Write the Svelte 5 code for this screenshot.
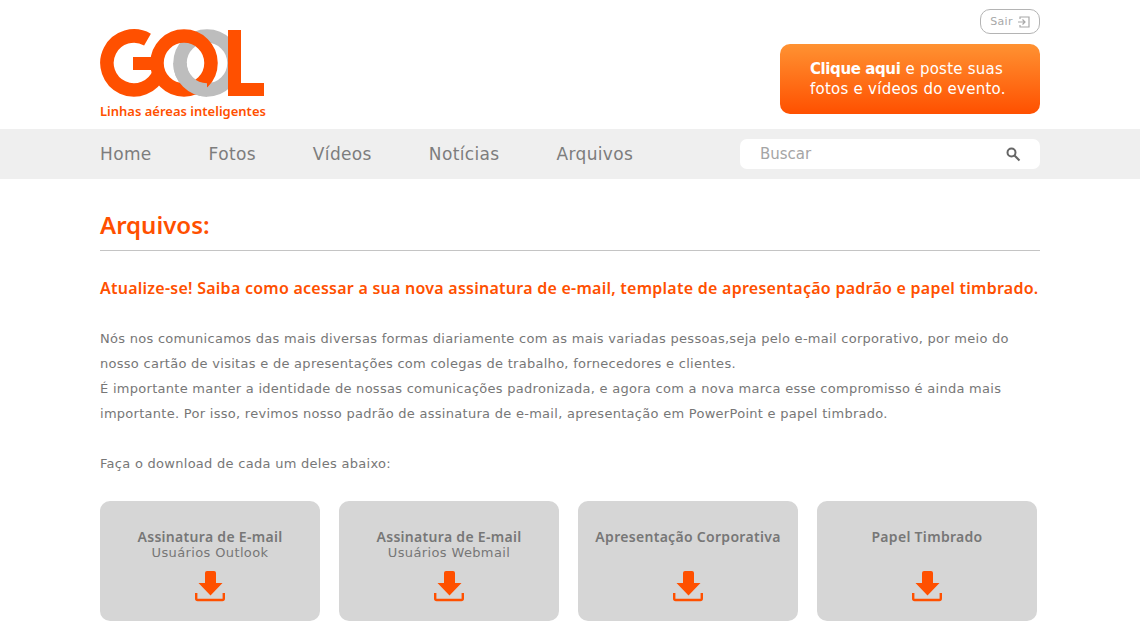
<script>
	const navItems = ['Home', 'Fotos', 'Vídeos', 'Notícias', 'Arquivos'];
	const downloads = [
		{ title: 'Assinatura de E-mail', sub: 'Usuários Outlook' },
		{ title: 'Assinatura de E-mail', sub: 'Usuários Webmail' },
		{ title: 'Apresentação Corporativa', sub: '' },
		{ title: 'Papel Timbrado', sub: '' }
	];
</script>

<div class="page">
	<header class="top wrap">
		<div class="brand">
			<svg class="logo" width="166" height="70" viewBox="0 0 166 70" fill="none">
				<circle cx="107" cy="34" r="27" stroke="#bdbdbd" stroke-width="13.500" />
				<circle cx="84" cy="34" r="27" stroke="#ff5000" stroke-width="13.500" />
				<path d="M47.500 10.600 A27 27 0 1 0 59 44" stroke="#ff5000" stroke-width="13.500" />
				<path d="M33 28h27v13H33z" fill="#ff5000" />
				<!-- gray ring passes over the orange one at the lower crossing -->
				<path d="M80 34 A27 27 0 0 0 107 61" stroke="#bdbdbd" stroke-width="13.500" />
				<path d="M128 1h13v53h23v13h-36z" fill="#ff5000" />
			</svg>
			<span class="tagline">Linhas aéreas inteligentes</span>
		</div>
		<div class="actions">
			<a class="logout" href="#sair">
				Sair
				<svg width="13" height="12" viewBox="0 0 13 12" fill="none" stroke="#a8a8a8" stroke-width="1.200">
					<path d="M3 3V1h9v10H3V9M1 6h7M5.500 3.500 8 6 5.500 8.500" />
				</svg>
			</a>
			<a class="cta" href="#postar"><b>Clique aqui</b> e poste suas<br />fotos e vídeos do evento.</a>
		</div>
	</header>

	<nav class="navbar">
		<div class="wrap nav-inner">
			<ul class="nav-list">
				{#each navItems as item}
					<li><a href="#{item}">{item}</a></li>
				{/each}
			</ul>
			<div class="search">
				<span>Buscar</span>
				<svg width="16" height="16" viewBox="0 0 16 16" fill="none" stroke="#666" stroke-width="2">
					<circle cx="6.500" cy="6.500" r="4" />
					<path d="M9.500 9.500 14.500 14.500" />
				</svg>
			</div>
		</div>
	</nav>

	<main class="wrap content">
		<h1>Arquivos:</h1>
		<h2>Atualize-se! Saiba como acessar a sua nova assinatura de e-mail, template de apresentação padrão e papel timbrado.</h2>
		<p class="text">
			Nós nos comunicamos das mais diversas formas diariamente com as mais variadas pessoas,seja pelo e-mail corporativo, por meio do<br />
			nosso cartão de visitas e de apresentações com colegas de trabalho, fornecedores e clientes.<br />
			É importante manter a identidade de nossas comunicações padronizada, e agora com a nova marca esse compromisso é ainda mais<br />
			importante. Por isso, revimos nosso padrão de assinatura de e-mail, apresentação em PowerPoint e papel timbrado.
		</p>
		<p class="text lead">Faça o download de cada um deles abaixo:</p>
		<div class="cards">
			{#each downloads as card}
				<a class="card" href="#download">
					<strong>{card.title}</strong>
					<span class="sub">{card.sub}</span>
					<svg width="30" height="31" viewBox="0 0 30 31" fill="#ff5000">
						<path d="M10 2a2 2 0 0 1 2-2h7a2 2 0 0 1 2 2v10h6.500L15.500 24.500 3.500 12H10z" />
						<path d="M1.200 22v5.500a1.500 1.500 0 0 0 1.500 1.500h24.600a1.500 1.500 0 0 0 1.500-1.500V22" fill="none" stroke="#ff5000" stroke-width="2.400" />
					</svg>
				</a>
			{/each}
		</div>
	</main>
</div>

<style>
	:global(body) {
		background: #fff;
		overflow: hidden;
	}
	.page {
		font-family: 'DejaVu Sans', sans-serif;
		color: #777;
		height: 640px;
		overflow: hidden;
	}
	.wrap {
		width: 940px;
		margin: 0 auto;
	}
	.top {
		height: 129px;
		display: flex;
		justify-content: space-between;
		box-sizing: border-box;
		padding-top: 9px;
	}
	.brand {
		display: flex;
		flex-direction: column;
		padding-top: 20px;
	}
	.tagline {
		font-family: 'Noto Sans', sans-serif;
		font-size: 13px;
		font-weight: 600;
		line-height: 16px;
		margin-top: 4px;
		color: #ff5000;
		white-space: nowrap;
	}
	.actions {
		display: flex;
		flex-direction: column;
		align-items: flex-end;
		gap: 10px;
	}
	.logout {
		height: 25px;
		width: 60px;
		box-sizing: border-box;
		border: 1px solid #b4b4b4;
		border-radius: 10px;
		display: flex;
		align-items: center;
		justify-content: center;
		gap: 4px;
		font-size: 11px;
		letter-spacing: 0.3px;
		color: #a8a8a8;
		text-decoration: none;
	}
	.cta {
		width: 260px;
		height: 70px;
		box-sizing: border-box;
		padding: 15px 0 0 30px;
		border-radius: 10px;
		background: linear-gradient(#ff9232, #ff5000);
		color: #fff;
		font-size: 15px;
		letter-spacing: 0.25px;
		line-height: 20px;
		text-decoration: none;
		white-space: nowrap;
	}
	.cta b {
		letter-spacing: -0.4px;
	}
	.navbar {
		height: 50px;
		background: #efefef;
	}
	.nav-inner {
		height: 100%;
		display: flex;
		align-items: center;
		justify-content: space-between;
	}
	.nav-list {
		list-style: none;
		display: flex;
		gap: 57px;
		margin: 0;
		padding: 0;
	}
	.nav-list a {
		font-size: 17px;
		letter-spacing: 0.35px;
		color: #7d7d7d;
		text-decoration: none;
	}
	.search {
		width: 300px;
		height: 30px;
		box-sizing: border-box;
		background: #fff;
		border-radius: 7px;
		display: flex;
		align-items: center;
		justify-content: space-between;
		padding: 0 19px 0 20px;
		font-size: 15px;
		color: #a5a5a5;
	}
	.content {
		padding-top: 30px;
	}
	h1 {
		font-family: 'Noto Sans', sans-serif;
		font-size: 24px;
		font-weight: 600;
		line-height: 32px;
		color: #ff5000;
		margin: 0;
		padding-bottom: 9px;
		border-bottom: 1px solid #c4c4c4;
	}
	h2 {
		font-family: 'Noto Sans', sans-serif;
		font-size: 16px;
		font-weight: 600;
		letter-spacing: 0.25px;
		line-height: 22px;
		color: #ff5000;
		margin: 26px 0 27px;
		white-space: nowrap;
	}
	.text {
		font-size: 13px;
		letter-spacing: 0.28px;
		line-height: 25px;
		color: #777;
		margin: 0;
		white-space: nowrap;
	}
	.lead {
		margin-top: 25px;
	}
	.cards {
		display: flex;
		gap: 19px;
		margin-top: 25px;
	}
	.card {
		width: 220px;
		height: 120px;
		box-sizing: border-box;
		background: #d6d6d6;
		border-radius: 10px;
		padding-top: 27px;
		display: flex;
		flex-direction: column;
		align-items: center;
		color: #777;
		text-decoration: none;
	}
	.card strong {
		font-family: 'Noto Sans', sans-serif;
		font-size: 14px;
		font-weight: 600;
		letter-spacing: 0.3px;
		line-height: 17px;
	}
	.sub {
		font-size: 13px;
		letter-spacing: 0.37px;
		line-height: 16px;
		height: 16px;
	}
	.card svg {
		margin-top: 10px;
	}
</style>
